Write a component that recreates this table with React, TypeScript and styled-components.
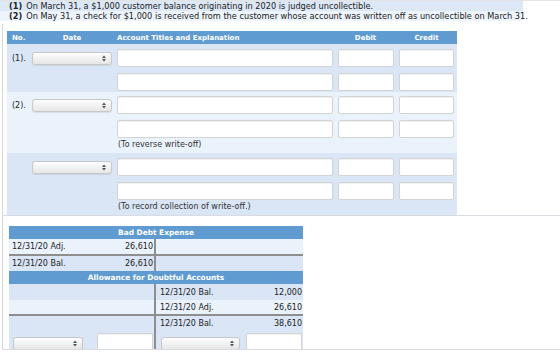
import React from "react";
import styled, { createGlobalStyle } from "styled-components";

const Global = createGlobalStyle`
  html, body { margin: 0; padding: 0; background: #ffffff; }
  body {
    font-family: "DejaVu Sans", Verdana, sans-serif;
    font-size: 8px;
    color: #222;
    width: 560px;
    height: 353px;
    overflow: hidden;
  }
  * { box-sizing: border-box; }
`;

const BLUE = "#5f9bd0";
const DARK = "#dae6f5";
const LIGHT = "#eaf2fc";

const Page = styled.div`
  border-top: 1px solid #e3e3e3;
`;

const Question = styled.div<{ $bg: string }>`
  width: 523px;
  height: 10px;
  line-height: 10px;
  padding-left: 9px;
  font-size: 8.2px;
  white-space: nowrap;
  background: ${(p) => p.$bg};
  b { font-weight: bold; margin-right: 4px; }
`;

const Frame = styled.div<{ $top: number; $padTop: number; $padLeft: number }>`
  margin-top: ${(p) => p.$top}px;
  margin-left: 2px;
  border-left: 1px solid #d6d6d6;
  border-bottom: 1px solid #d9dde3;
  padding: ${(p) => p.$padTop}px 0 0 ${(p) => p.$padLeft}px;
`;

const COLS = "23px 84px 221px 61px 61px";

const Table = styled.div`
  width: 450px;
`;

const HeadRow = styled.div`
  display: grid;
  grid-template-columns: ${COLS};
  height: 13px;
  align-items: center;
  background: ${BLUE};
  color: #fff;
  font-weight: bold;
  font-size: 7px;
`;

const HeadCell = styled.div<{ $align?: string; $pad?: number }>`
  text-align: ${(p) => p.$align || "left"};
  padding-left: ${(p) => p.$pad || 0}px;
`;

const Block = styled.div<{ $bg: string; $h: number; $pt: number }>`
  background: ${(p) => p.$bg};
  height: ${(p) => p.$h}px;
  padding-top: ${(p) => p.$pt}px;
  display: flex;
  flex-direction: column;
  gap: 6px;
`;

const Line = styled.div`
  display: grid;
  grid-template-columns: ${COLS};
  height: 18px;
  align-items: center;
`;

const NoCell = styled.div`
  padding-left: 5px;
  font-size: 8px;
`;

const DateCell = styled.div`
  padding-left: 2px;
  display: flex;
  align-items: center;
`;

const InputCell = styled.div`
  padding-left: 3px;
  display: flex;
  align-items: center;
`;

const Field = styled.input<{ $w: number }>`
  width: ${(p) => p.$w}px;
  height: 18px;
  margin: 0;
  padding: 0 3px;
  border: 1px solid #d4d4d4;
  border-radius: 2px;
  background: #fff;
  box-shadow: inset 0 1px 1px rgba(0, 0, 0, 0.06);
  font: inherit;
  outline: none;
`;

const Caption = styled.div`
  display: grid;
  grid-template-columns: ${COLS};
  margin-top: -6px;
  height: 14px;
  line-height: 14px;
  span { grid-column: 3; padding-left: 4px; font-size: 8px; color: #333; }
`;

const SelectBox = styled.div<{ $w: number }>`
  position: relative;
  width: ${(p) => p.$w}px;
  height: 13px;
  border: 1px solid #c8c8c8;
  border-radius: 3px;
  background: linear-gradient(#fdfdfd, #e6e6e6);
  box-shadow: 0 1px 1px rgba(0, 0, 0, 0.08);
  svg { position: absolute; right: 5px; top: 2px; }
`;

const Select = ({ w }: { w: number }) => (
  <SelectBox $w={w}>
    <svg width="4" height="7" viewBox="0 0 4 7">
      <path d="M0 3 L2 0.5 L4 3 Z M0 4 L2 6.5 L4 4 Z" fill="#555" />
    </svg>
  </SelectBox>
);

const TAcct = styled.div`
  width: 294px;
`;

const THead = styled.div`
  height: 13px;
  line-height: 13px;
  background: ${BLUE};
  color: #fff;
  font-weight: bold;
  font-size: 7.4px;
  text-align: center;
`;

const TRow = styled.div<{ $bg: string; $h: number; $rule?: boolean }>`
  display: flex;
  height: ${(p) => p.$h}px;
  background: ${(p) => p.$bg};
  border-bottom: ${(p) => (p.$rule ? "2px solid #8e8e8e" : "none")};
  overflow: hidden;
`;

const TSide = styled.div<{ $w?: number; $left?: boolean }>`
  ${(p) => (p.$w ? `width: ${p.$w}px;` : "flex: 1;")}
  display: flex;
  align-items: center;
  justify-content: space-between;
  padding: 0 1px 0 ${(p) => (p.$left ? 3 : 4)}px;
  border-right: ${(p) => (p.$left ? "2px solid #8e8e8e" : "none")};
  font-size: 8px;
`;

const InputSide = styled.div<{ $w?: number; $left?: boolean; $pl: number }>`
  ${(p) => (p.$w ? `width: ${p.$w}px;` : "flex: 1;")}
  display: flex;
  align-items: flex-start;
  justify-content: space-between;
  padding: 2px 1px 0 ${(p) => p.$pl}px;
  border-right: ${(p) => (p.$left ? "2px solid #8e8e8e" : "none")};
  > div { margin-top: 4px; }
`;

const Entry = ({ label, amt }: { label?: string; amt?: string }) => (
  <>
    <span>{label}</span>
    <span>{amt}</span>
  </>
);

export default function App() {
  return (
    <Page>
      <Global />
      <Question $bg="#dce8f6">
        <b>(1)</b>On March 31, a $1,000 customer balance originating in 2020 is judged uncollectible.
      </Question>
      <Question $bg="#eef4fc">
        <b>(2)</b>On May 31, a check for $1,000 is received from the customer whose account was written off as uncollectible on March 31.
      </Question>

      <Frame $top={3} $padTop={7} $padLeft={4}>
        <Table>
          <HeadRow>
            <HeadCell $pad={5}>No.</HeadCell>
            <HeadCell $align="center">Date</HeadCell>
            <HeadCell $pad={3}>Account Titles and Explanation</HeadCell>
            <HeadCell $align="center">Debit</HeadCell>
            <HeadCell $align="center">Credit</HeadCell>
          </HeadRow>

          <Block $bg={DARK} $h={48} $pt={5}>
            <Line>
              <NoCell>(1).</NoCell>
              <DateCell><Select w={80} /></DateCell>
              <InputCell><Field $w={216} /></InputCell>
              <InputCell><Field $w={56} /></InputCell>
              <InputCell><Field $w={55} /></InputCell>
            </Line>
            <Line>
              <NoCell />
              <DateCell />
              <InputCell><Field $w={216} /></InputCell>
              <InputCell><Field $w={56} /></InputCell>
              <InputCell><Field $w={55} /></InputCell>
            </Line>
          </Block>

          <Block $bg={LIGHT} $h={61} $pt={4}>
            <Line>
              <NoCell>(2).</NoCell>
              <DateCell><Select w={80} /></DateCell>
              <InputCell><Field $w={216} /></InputCell>
              <InputCell><Field $w={56} /></InputCell>
              <InputCell><Field $w={55} /></InputCell>
            </Line>
            <Line>
              <NoCell />
              <DateCell />
              <InputCell><Field $w={216} /></InputCell>
              <InputCell><Field $w={56} /></InputCell>
              <InputCell><Field $w={55} /></InputCell>
            </Line>
            <Caption><span>(To reverse write-off)</span></Caption>
          </Block>

          <Block $bg={DARK} $h={62} $pt={5}>
            <Line>
              <NoCell />
              <DateCell><Select w={80} /></DateCell>
              <InputCell><Field $w={216} /></InputCell>
              <InputCell><Field $w={56} /></InputCell>
              <InputCell><Field $w={55} /></InputCell>
            </Line>
            <Line>
              <NoCell />
              <DateCell />
              <InputCell><Field $w={216} /></InputCell>
              <InputCell><Field $w={56} /></InputCell>
              <InputCell><Field $w={55} /></InputCell>
            </Line>
            <Caption><span>(To record collection of write-off.)</span></Caption>
          </Block>
        </Table>
      </Frame>

      <Frame $top={0} $padTop={10} $padLeft={6}>
        <TAcct>
          <THead>Bad Debt Expense</THead>
          <TRow $bg={LIGHT} $h={17} $rule>
            <TSide $w={147} $left><Entry label="12/31/20 Adj." amt="26,610" /></TSide>
            <TSide />
          </TRow>
          <TRow $bg={DARK} $h={15}>
            <TSide $w={147} $left><Entry label="12/31/20 Bal." amt="26,610" /></TSide>
            <TSide />
          </TRow>
          <THead>Allowance for Doubtful Accounts</THead>
          <TRow $bg={DARK} $h={16}>
            <TSide $w={147} $left />
            <TSide><Entry label="12/31/20 Bal." amt="12,000" /></TSide>
          </TRow>
          <TRow $bg={LIGHT} $h={16} $rule>
            <TSide $w={147} $left />
            <TSide><Entry label="12/31/20 Adj." amt="26,610" /></TSide>
          </TRow>
          <TRow $bg={DARK} $h={15}>
            <TSide $w={147} $left />
            <TSide><Entry label="12/31/20 Bal." amt="38,610" /></TSide>
          </TRow>
          <TRow $bg={DARK} $h={18}>
            <InputSide $w={147} $left $pl={4}>
              <Select w={70} />
              <Field $w={56} />
            </InputSide>
            <InputSide $pl={5}>
              <Select w={79} />
              <Field $w={56} />
            </InputSide>
          </TRow>
        </TAcct>
      </Frame>
    </Page>
  );
}
